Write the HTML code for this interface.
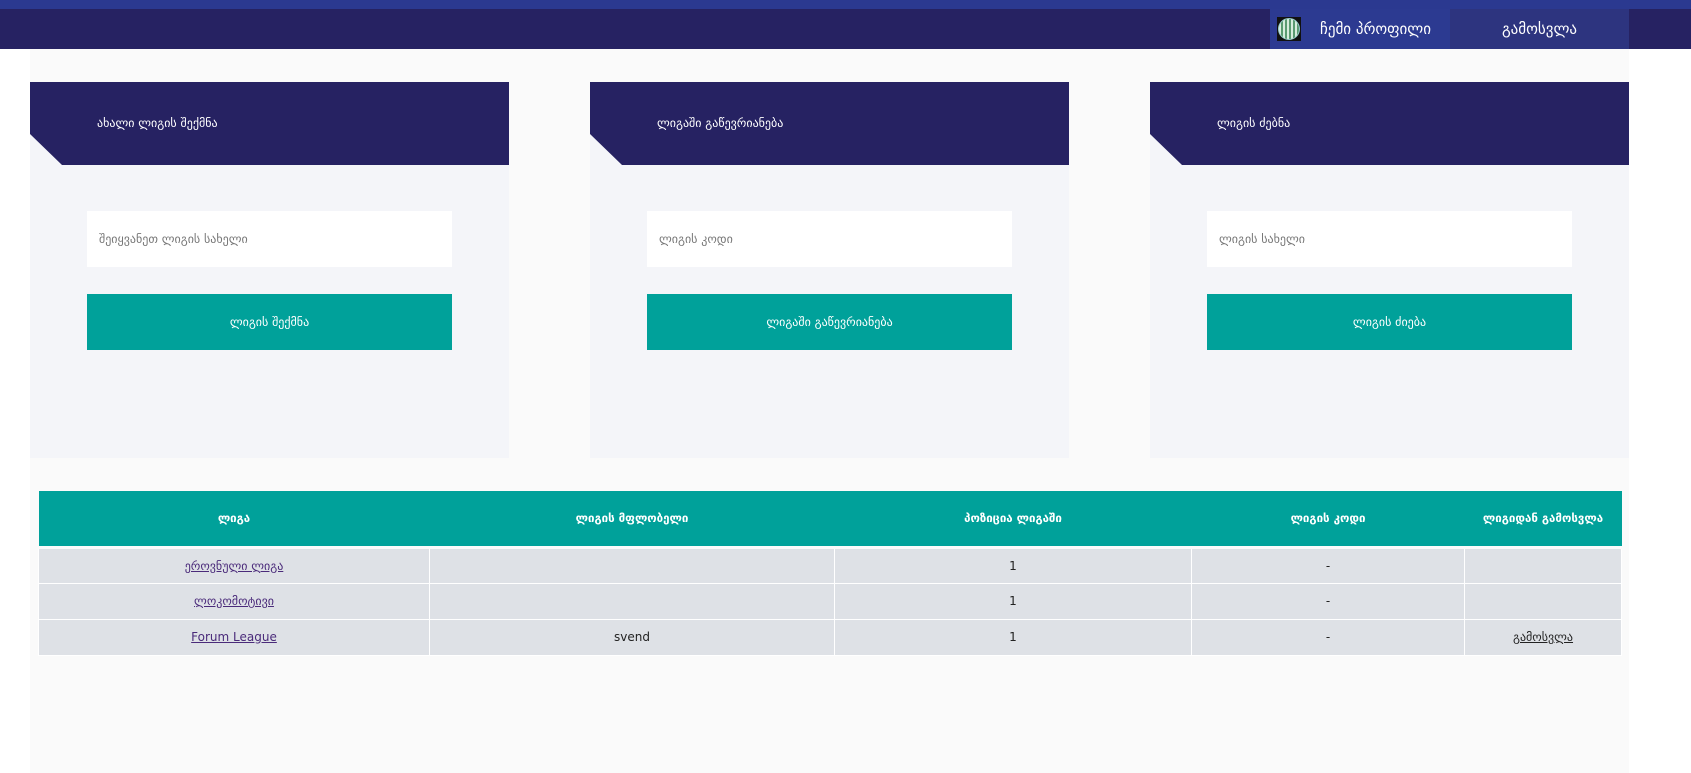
<!DOCTYPE html>
<html><head><meta charset="utf-8"><style>
*{margin:0;padding:0;box-sizing:border-box}
body{width:1691px;height:773px;background:#fff;font-family:"DejaVu Sans","Liberation Sans",sans-serif;position:relative;overflow:hidden}
.top{position:absolute;left:0;top:0;width:1691px;height:9px;background:#2b3990}
.nav{position:absolute;left:0;top:9px;width:1691px;height:40px;background:#262262}
.pbtn{position:absolute;left:1270px;top:9px;width:180px;height:40px;background:#2c3a91;color:#fff;font-size:15px;line-height:40px;padding-left:50px;white-space:nowrap}
.logo{position:absolute;left:1277px;top:17px;width:24px;height:24px;background:#111}
.logo i{position:absolute;left:1px;top:1px;width:22px;height:22px;border-radius:50%;background:repeating-linear-gradient(90deg,#d6ecdc 0 2px,#5a9a70 2px 4px);border:1px solid #9cc}
.lbtn{position:absolute;left:1450px;top:9px;width:179px;height:40px;background:#2d347f;color:#fff;font-size:15px;line-height:40px;text-align:center}
.main{position:absolute;left:30px;top:49px;width:1599px;height:724px;background:#fafafa}
.card{position:absolute;top:82px;width:479px;height:376px;background:#f4f5f9}
.hd{position:absolute;left:0;top:0;width:479px;height:83px;background:#262262;clip-path:polygon(0 0,100% 0,100% 100%,32px 100%,0 52px);color:#fff;font-size:12px;padding:34px 0 0 67px;white-space:nowrap}
.in{position:absolute;left:57px;top:129px;width:365px;height:56px;background:#fff;color:#777;font-size:12px;line-height:56px;padding-left:12px}
.bt{position:absolute;left:57px;top:212px;width:365px;height:56px;background:#00a19a;color:#fff;font-size:12px;line-height:56px;text-align:center}
table{position:absolute;left:38px;top:491px;width:1584px;border-collapse:collapse;font-size:12px}
th{background:#00a19a;color:#fff;height:56px;font-weight:bold;font-size:11.5px;border-bottom:3px solid #fafafa}
td{background:#dee1e6;height:36px;text-align:center;border:1px solid #fff;color:#222}
td a{color:#4a2a7a}
</style></head><body>
<div class="top"></div><div class="nav"></div>
<div class="pbtn">ჩემი პროფილი</div><div class="logo"><i></i></div>
<div class="lbtn">გამოსვლა</div>
<div class="main"></div>
<div class="card" style="left:30px"><div class="hd">ახალი ლიგის შექმნა</div><div class="in">შეიყვანეთ ლიგის სახელი</div><div class="bt">ლიგის შექმნა</div></div>
<div class="card" style="left:590px"><div class="hd">ლიგაში გაწევრიანება</div><div class="in">ლიგის კოდი</div><div class="bt">ლიგაში გაწევრიანება</div></div>
<div class="card" style="left:1150px"><div class="hd">ლიგის ძებნა</div><div class="in">ლიგის სახელი</div><div class="bt">ლიგის ძიება</div></div>
<table>
<tr><th style="width:391px">ლიგა</th><th style="width:405px">ლიგის მფლობელი</th><th style="width:357px">პოზიცია ლიგაში</th><th style="width:273px">ლიგის კოდი</th><th>ლიგიდან გამოსვლა</th></tr>
<tr><td><a href="#">ეროვნული ლიგა</a></td><td></td><td>1</td><td>-</td><td></td></tr>
<tr><td><a href="#">ლოკომოტივი</a></td><td></td><td>1</td><td>-</td><td></td></tr>
<tr><td><a href="#">Forum League</a></td><td>svend</td><td>1</td><td>-</td><td><a href="#" style="color:#222">გამოსვლა</a></td></tr>
</table>
</body></html>
